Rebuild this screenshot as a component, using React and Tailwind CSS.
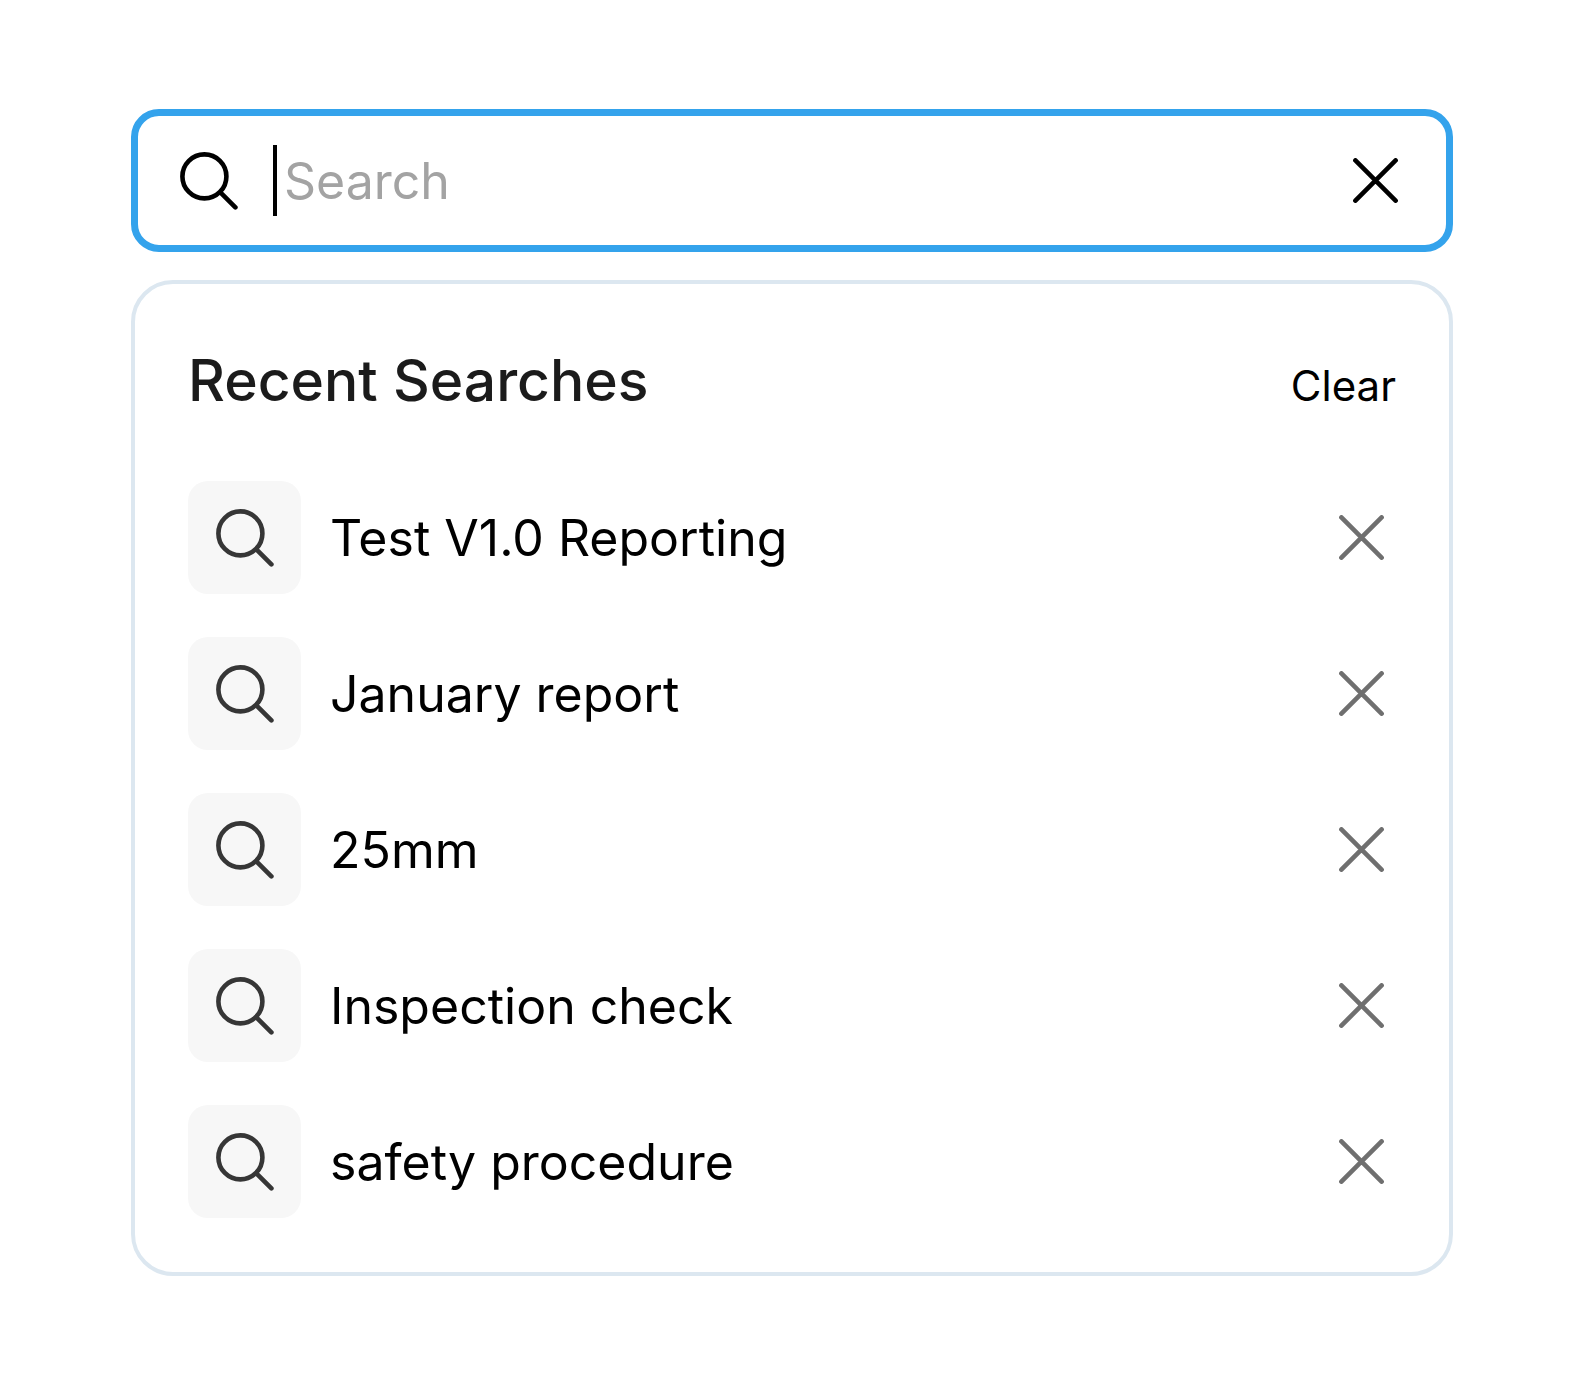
import { useState } from 'react';

const INITIAL_SEARCHES = [
  'Test V1.0 Reporting',
  'January report',
  '25mm',
  'Inspection check',
  'safety procedure',
];

function SearchIcon({ className }) {
  return (
    <svg viewBox="0 0 58 58" fill="none" stroke="currentColor" strokeWidth="4.6" strokeLinecap="round" className={`w-[58px] h-[58px] flex-shrink-0 ${className}`} aria-hidden="true">
      <circle cx="24.4" cy="24.4" r="22" />
      <path d="M40.4 40.4L55.4 55.4" />
    </svg>
  );
}

function CloseIcon() {
  return (
    <svg viewBox="0 0 45 45" fill="none" stroke="currentColor" strokeWidth="4.6" strokeLinecap="round" className="w-[45px] h-[45px]" aria-hidden="true">
      <path d="M2.4 2.4L42.6 42.6M42.6 2.4L2.4 42.6" />
    </svg>
  );
}

export default function App() {
  const [query, setQuery] = useState('');
  const [searches, setSearches] = useState(INITIAL_SEARCHES);

  const removeSearch = (item) => setSearches((list) => list.filter((s) => s !== item));

  return (
    <main className="min-h-screen bg-white px-[131px] pt-[109px] pb-24 font-['Inter',sans-serif] text-black">
      {/* Search field */}
      <div className="flex items-center h-[143px] pl-[42px] pr-9 border-[7px] border-[#34a3ec] rounded-[28px]">
        <SearchIcon className="text-black" />
        {query === '' && <span className="w-1 h-[71px] ml-[35px] bg-black flex-shrink-0" />}
        <input
          type="text"
          aria-label="Search"
          placeholder="Search"
          value={query}
          onChange={(e) => setQuery(e.target.value)}
          className="flex-1 min-w-0 ml-[7px] text-[50px] leading-[60px] outline-none placeholder:text-[#a3a3a3]"
        />
        <button type="button" aria-label="Clear search" onClick={() => setQuery('')} className="w-[69px] h-[69px] flex items-center justify-center">
          <CloseIcon />
        </button>
      </div>

      {/* Recent searches */}
      <section className="mt-7 px-[53px] pt-[63px] pb-[54px] border-4 border-[#dce7f0] rounded-[42px]">
        <div className="flex items-baseline justify-between">
          <h2 className="text-[57px] leading-[68px] font-medium text-[#1b1b1b]">Recent Searches</h2>
          <button type="button" onClick={() => setSearches([])} className="text-[42px] leading-[50px]">
            Clear
          </button>
        </div>

        <ul className="mt-[66px] flex flex-col gap-[43px]">
          {searches.map((item) => (
            <li key={item} className="flex items-center">
              <span className="w-[113px] h-[113px] flex items-center justify-center flex-shrink-0 bg-[#f7f7f7] rounded-[20px]">
                <SearchIcon className="text-[#363636]" />
              </span>
              <span className="flex-1 min-w-0 ml-[29px] text-[50px] leading-[60px]">{item}</span>
              <button type="button" aria-label={`Remove ${item}`} onClick={() => removeSearch(item)} className="w-[69px] h-[69px] flex items-center justify-center text-[#6f6f6f]">
                <CloseIcon />
              </button>
            </li>
          ))}
        </ul>
      </section>
    </main>
  );
}
